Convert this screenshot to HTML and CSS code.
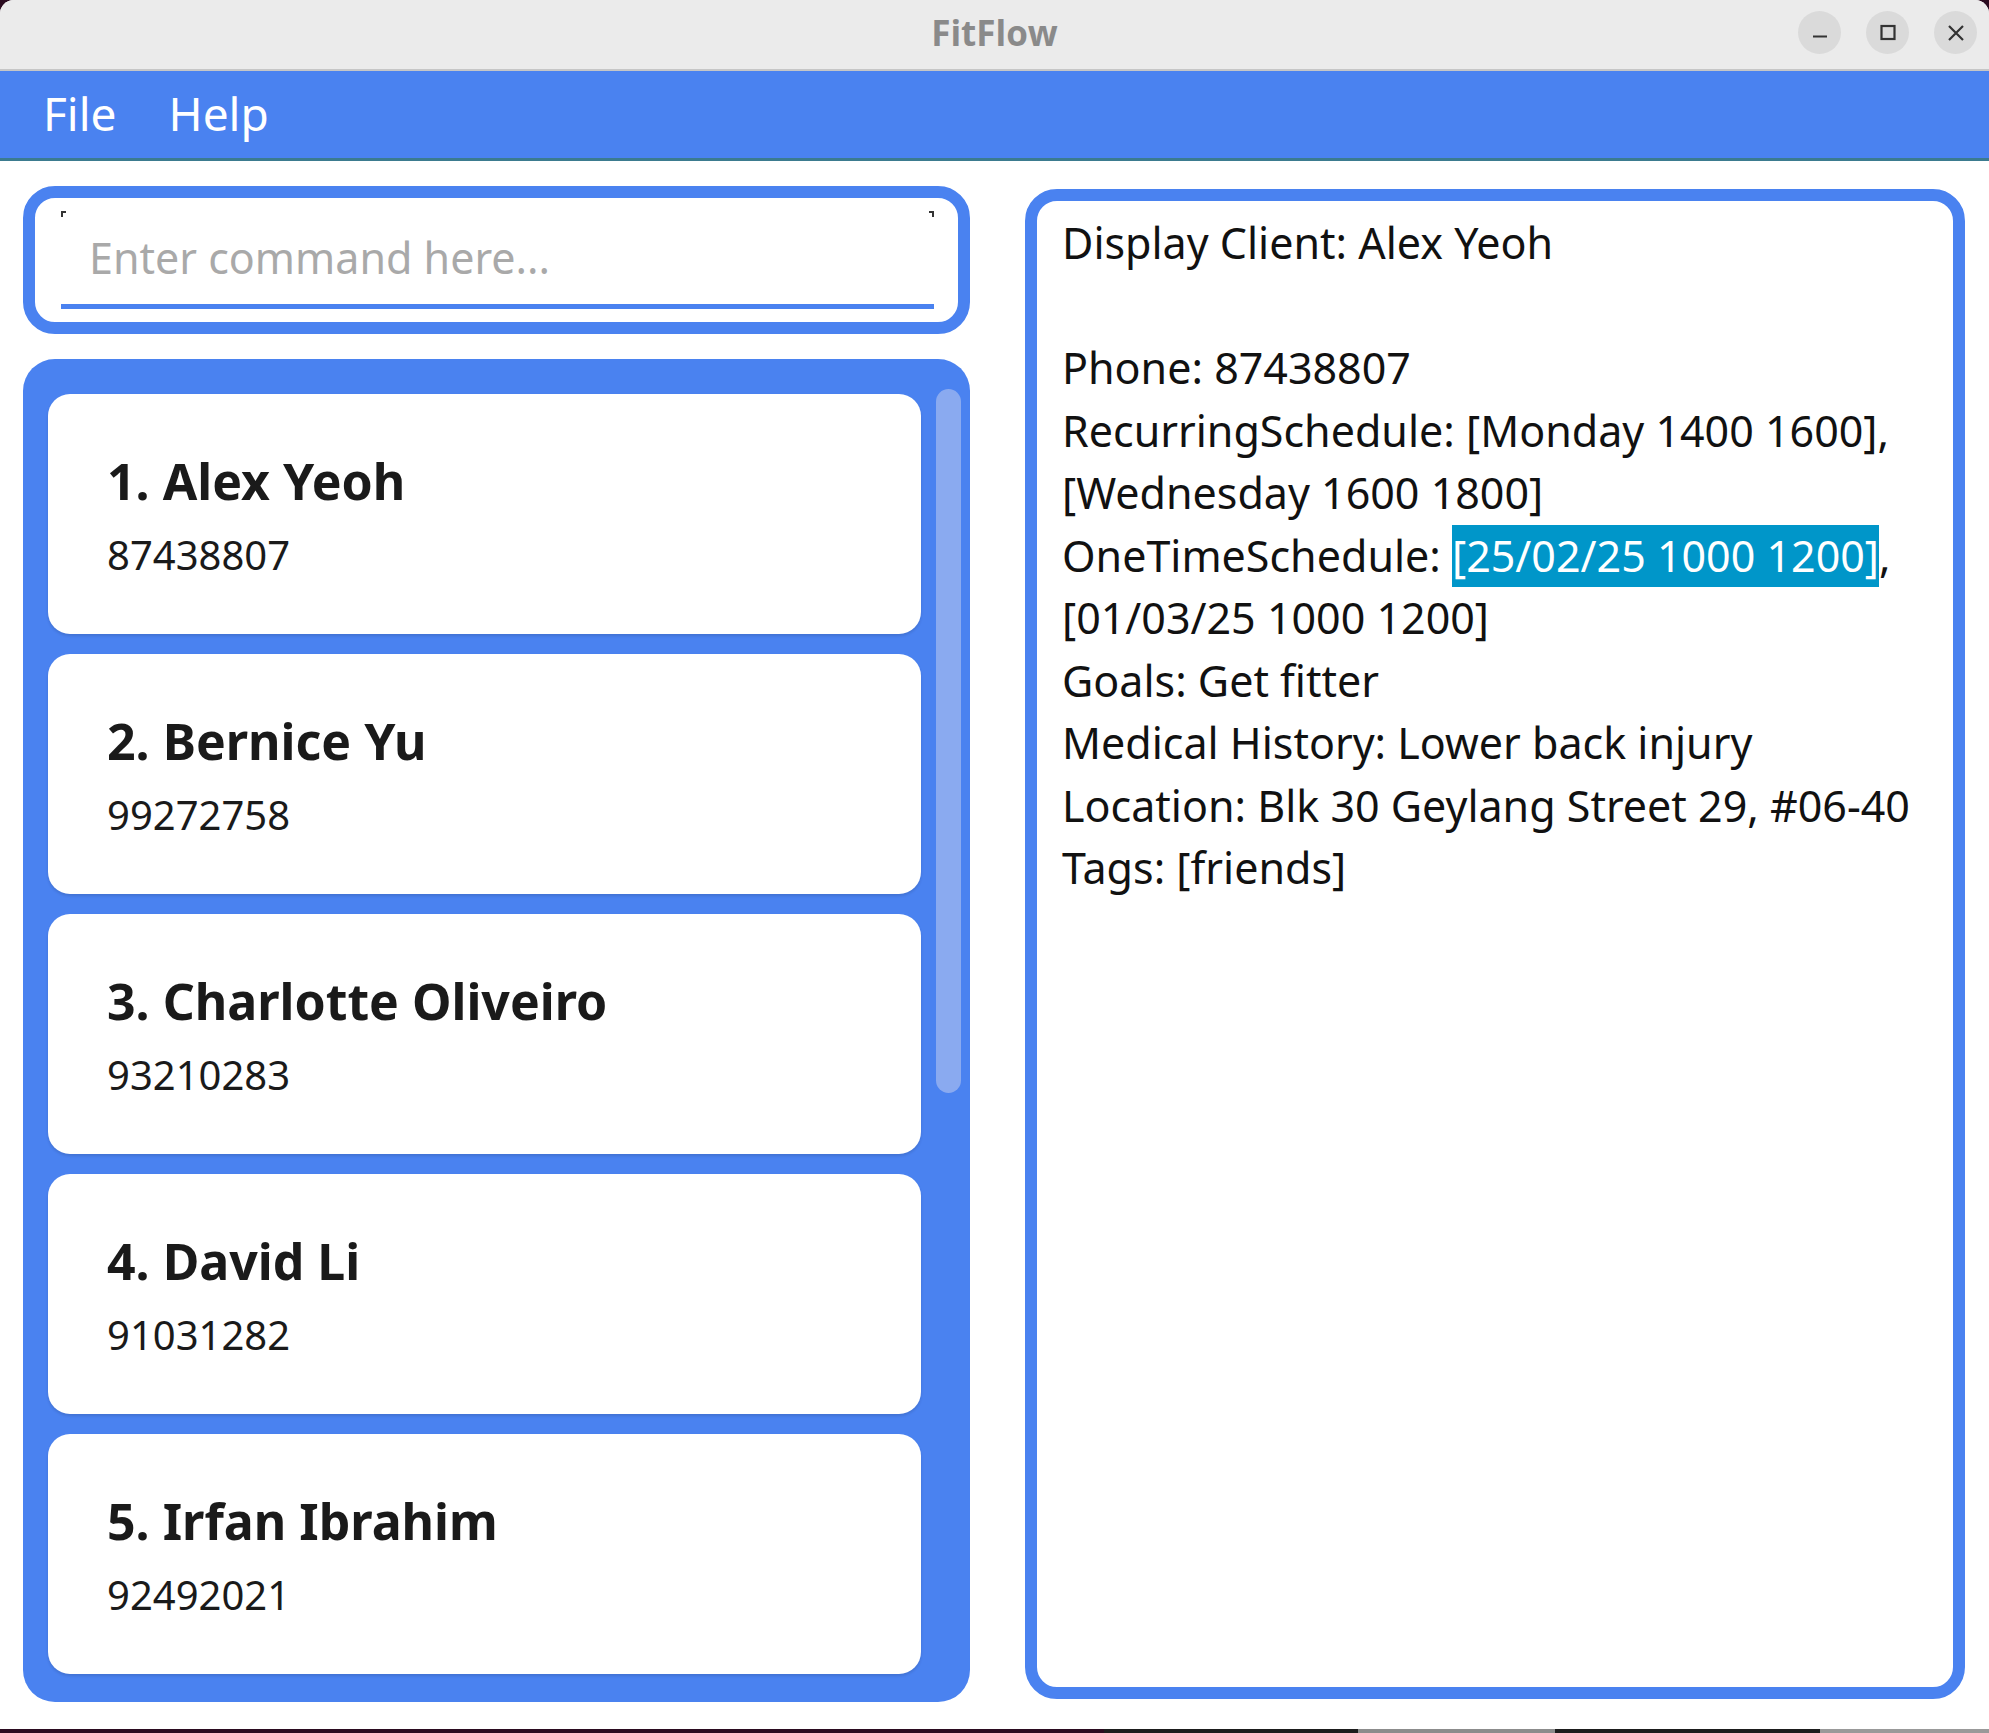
FILE: index.html
```html
<!DOCTYPE html>
<html lang="en">
<head>
  <meta charset="UTF-8">
  <title>FitFlow</title>
  <link rel="stylesheet" href="styles.css">
</head>
<body>

<div class="window">
  <div class="titlebar">
    <span class="title">FitFlow</span>
    <div class="winbtns">
      <span class="winbtn">
        <svg width="20" height="20" viewBox="0 0 20 20"><path d="M3 13.5h14" stroke="#333" stroke-width="2.2"/></svg>
      </span>
      <span class="winbtn">
        <svg width="20" height="20" viewBox="0 0 20 20"><rect x="3.5" y="3" width="13" height="13" fill="none" stroke="#333" stroke-width="2.2"/></svg>
      </span>
      <span class="winbtn">
        <svg width="20" height="20" viewBox="0 0 20 20"><path d="M3 3l14 14M17 3L3 17" stroke="#333" stroke-width="2.2"/></svg>
      </span>
    </div>
  </div>

  <div class="menubar">
    <span class="menu-item">File</span>
    <span class="menu-item">Help</span>
  </div>

  <div class="main">
    <div class="left">
      <div class="command-box">
        <div class="command-field">
          <input type="text" class="command-input" placeholder="Enter command here...">
        </div>
      </div>

      <div class="client-list">
        <div class="cards">
          <div class="card">
            <div class="card-name">1. Alex Yeoh</div>
            <div class="card-phone">87438807</div>
          </div>
          <div class="card">
            <div class="card-name">2. Bernice Yu</div>
            <div class="card-phone">99272758</div>
          </div>
          <div class="card">
            <div class="card-name">3. Charlotte Oliveiro</div>
            <div class="card-phone">93210283</div>
          </div>
          <div class="card">
            <div class="card-name">4. David Li</div>
            <div class="card-phone">91031282</div>
          </div>
          <div class="card">
            <div class="card-name">5. Irfan Ibrahim</div>
            <div class="card-phone">92492021</div>
          </div>
        </div>
        <div class="scrollbar"></div>
      </div>
    </div>

    <div class="detail">
      <div class="line">Display Client: Alex Yeoh</div>
      <div class="line">&nbsp;</div>
      <div class="line">Phone: 87438807</div>
      <div class="line">RecurringSchedule: [Monday 1400 1600],</div>
      <div class="line">[Wednesday 1600 1800]</div>
      <div class="line">OneTimeSchedule: <span class="selected">[25/02/25 1000 1200]</span>,</div>
      <div class="line">[01/03/25 1000 1200]</div>
      <div class="line">Goals: Get fitter</div>
      <div class="line">Medical History: Lower back injury</div>
      <div class="line">Location: Blk 30 Geylang Street 29, #06-40</div>
      <div class="line">Tags: [friends]</div>
    </div>
  </div>
</div>

<div class="taskbar">
  <span class="tb tb-a"></span>
  <span class="tb tb-b"></span>
  <span class="tb tb-c"></span>
  <span class="tb tb-b2"></span>
  <span class="tb tb-d"></span>
</div>

</body>
</html>
```

FILE: styles.css
```css
html {
  background: #2b0b20;
}
body {
  margin: 0;
  font-family: 'Noto Sans', 'Open Sans', sans-serif;
  color: #111;
  width: 1989px;
  height: 1733px;
  overflow: hidden;
}
.window {
  background: white;
  border-radius: 14px 14px 0 0;
  overflow: hidden;
  height: 1729px;
  display: flex;
  flex-direction: column;
}
.titlebar {
  height: 69px;
  background: #ebebeb;
  border-bottom: 2px solid #c6c6c6;
  display: flex;
  align-items: center;
  justify-content: center;
  position: relative;
}
.title {
  font-family: 'Open Sans', sans-serif;
  font-weight: 700;
  font-size: 35px;
  color: #8a8a8a;
  margin-top: -4px;
}
.winbtns {
  position: absolute;
  right: 12px;
  top: 11px;
  display: flex;
  gap: 25px;
}
.winbtn {
  width: 43px;
  height: 43px;
  border-radius: 50%;
  background: #dadada;
  display: flex;
  align-items: center;
  justify-content: center;
}
.menubar {
  height: 87px;
  background: #4a82f0;
  border-bottom: 3px solid #3b7b8f;
  display: flex;
  align-items: center;
  padding-left: 17px;
}
.menu-item {
  color: white;
  font-size: 46px;
  padding: 0 26px;
  line-height: 62px;
  margin-top: -3px;
}
.main {
  flex: 1;
  display: flex;
  gap: 55px;
  padding: 25px 24px 27px 23px;
  min-height: 0;
}
.left {
  width: 947px;
  display: flex;
  flex-direction: column;
  gap: 25px;
}
.command-box {
  box-sizing: border-box;
  height: 148px;
  border: 12px solid #4a82f0;
  border-radius: 32px;
  padding: 13px 24px 0 26px;
}
.command-field {
  position: relative;
  height: 98px;
}
.command-field::before,
.command-field::after {
  content: '';
  position: absolute;
  top: 0;
  width: 3px;
  height: 4px;
  border-top: 2px solid #333;
}
.command-field::before {
  left: 0;
  border-left: 2px solid #333;
}
.command-field::after {
  right: 0;
  border-right: 2px solid #333;
}
.command-input {
  box-sizing: border-box;
  width: 100%;
  height: 98px;
  border: none;
  border-bottom: 5px solid #4a82f0;
  outline: none;
  background: transparent;
  font-family: 'Noto Sans', sans-serif;
  font-size: 43px;
  padding: 0 0 0 28px;
  color: #111;
}
.command-input::placeholder {
  color: #a9a9a9;
}
.client-list {
  flex: 1;
  background: #4a82f0;
  border-radius: 32px;
  display: flex;
  padding: 30px 9px 0 25px;
  overflow: hidden;
}
.cards {
  flex: 1;
  display: flex;
  flex-direction: column;
  gap: 20px;
  padding-top: 5px;
}
.card {
  flex: none;
  height: 240px;
  box-sizing: border-box;
  background: white;
  border-radius: 22px;
  padding: 53px 0 0 59px;
  box-shadow: 0 2px 3px rgba(0,0,0,0.12);
}
.card-name {
  font-size: 50px;
  font-weight: 700;
  color: #1a1a1a;
  margin-bottom: 12px;
}
.card-phone {
  font-size: 40px;
  color: #1a1a1a;
}
.scrollbar {
  width: 25px;
  height: 704px;
  margin-left: 15px;
  background: #8aaaf0;
  border-radius: 13px;
}
.detail {
  flex: 1;
  margin: 3px 0 3px;
  border: 12px solid #4a82f0;
  border-radius: 32px;
  padding: 11px 10px 0 25px;
  font-size: 43px;
  line-height: 62.5px;
  color: #111;
}
.line {
  white-space: nowrap;
}
.selected {
  display: inline-block;
  background: #0096c9;
  color: white;
}
.taskbar {
  height: 4px;
  display: flex;
}
.tb {
  height: 4px;
}
.tb-a { width: 1104px; background: #2b0b20; }
.tb-b { width: 254px; background: #1d1d1d; }
.tb-c { width: 197px; background: #8c8c8c; }
.tb-b2 { width: 265px; background: #1d1d1d; }
.tb-d { flex: 1; background: #999; }
```
